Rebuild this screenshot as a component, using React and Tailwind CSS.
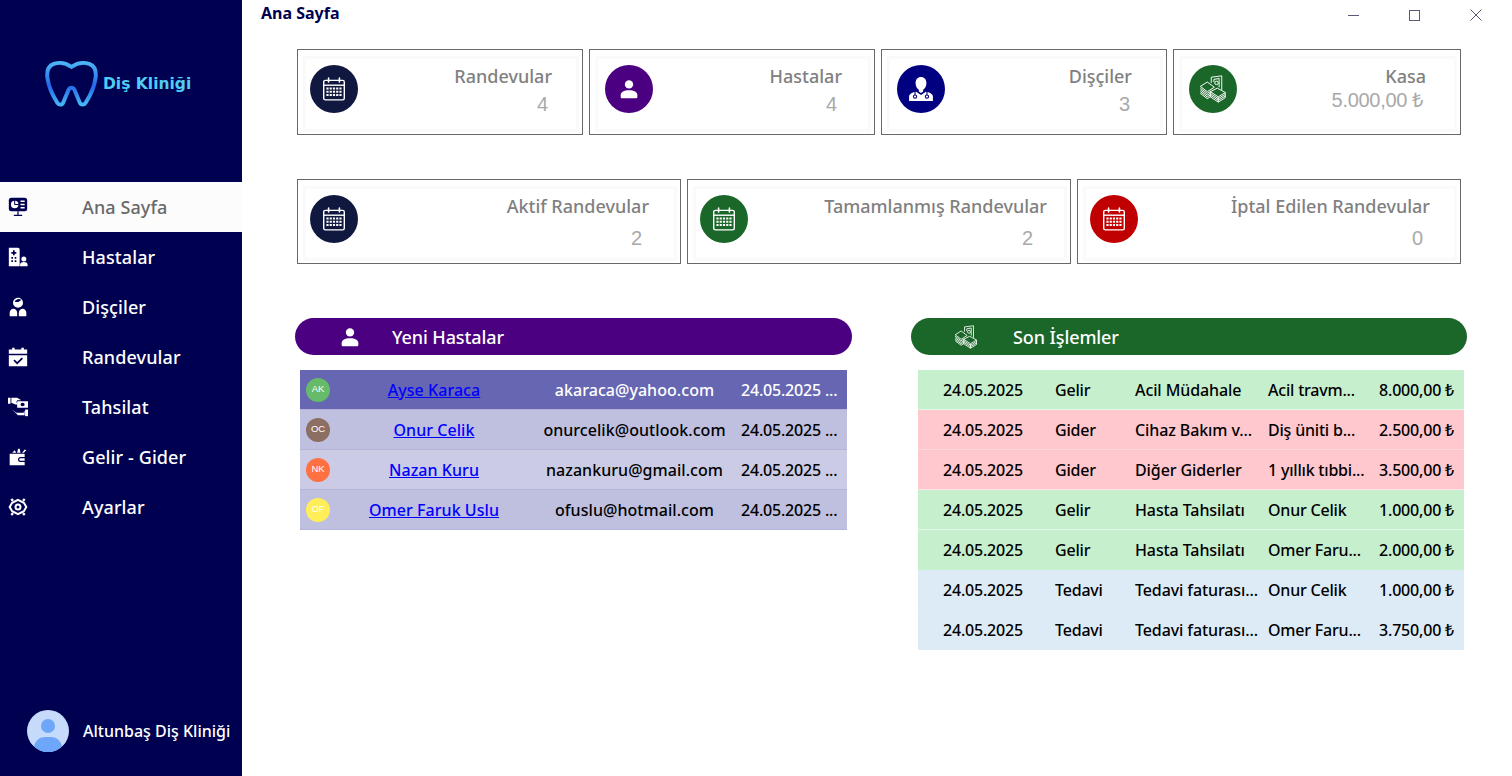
import React from 'react'

const FONT = { fontFamily: '"Noto Sans", "Open Sans", sans-serif' }

const CalendarIcon = ({ className }) => (
  <svg viewBox="0 0 24 24" className={className} fill="none" stroke="currentColor">
    <rect x="2.5" y="4" width="19" height="18" rx="1.5" strokeWidth="1.3" />
    <path d="M2.5 8.5h19" strokeWidth="1.3" />
    <path d="M7 2v3.5M17 2v3.5" strokeWidth="1.5" strokeLinecap="round" />
    <path d="M5 11.5h14M5 14.5h14M5 17.5h14" strokeWidth="1.7" strokeDasharray="2 1" />
  </svg>
)

const PersonIcon = ({ className }) => (
  <svg viewBox="0 0 24 24" className={className} fill="currentColor">
    <circle cx="12" cy="6.5" r="5" />
    <path d="M2 22v-2.5C2 15.5 6 13.5 12 13.5s10 2 10 6V22c0 .6-.4 1-1 1H3c-.6 0-1-.4-1-1z" />
  </svg>
)

const DoctorIcon = ({ className }) => (
  <svg viewBox="0 0 24 24" className={className}>
    <path fill="currentColor" d="M12 1c3 0 5 2.4 5 5.6 0 2.6-1.4 5-3 6.2v1.4l-2 1.600-2-1.600v-1.400C8.400 11.600 7 9.200 7 6.600 7 3.400 9 1 12 1z" />
    <path fill="currentColor" d="M7.500 14.500l4.500 3 4.500-3c3 .6 6.500 1.800 6.500 4.500v4H1v-4c0-2.700 3.500-3.900 6.500-4.500z" />
    <path fill="none" stroke="#000080" strokeWidth="1" d="M6.500 14.500v3M17.500 14.500v3" />
    <circle cx="6.500" cy="19" r="1.500" fill="none" stroke="#000080" strokeWidth="1" />
    <circle cx="17.500" cy="19" r="1.500" fill="none" stroke="#000080" strokeWidth="1" />
  </svg>
)

const MoneyIcon = ({ className }) => (
  <svg viewBox="0 0 32 32" className={className} fill="none" stroke="currentColor" strokeWidth="1.1" strokeLinejoin="round">
    <path d="M14 9V2.500l12-1.500v16" />
    <path d="M17 8V5l6-1v10" />
    <circle cx="20" cy="9" r="2" />
    <path d="M1.500 13l8-5 8 6-8 5z" />
    <path d="M1.500 15l8 6 4-2.500M1.500 17l8 6 4-2.500M1.500 19l8 6 4-2.500M1.500 21l8 6 4-2.500" />
    <path d="M13 19l8-4 9 5-8 5zM13 19v2l9 6 8-5v-2M13 21v2l9 6 8-5v-2M13 23v2l9 6 8-5v-2" />
    <path d="M22 25v6" />
  </svg>
)

const MonitorIcon = ({ className }) => (
  <svg viewBox="0 0 24 24" className={className}>
    <rect x="1" y="1" width="22" height="16" rx="3" fill="currentColor" />
    <path d="M12 17v4.500M7 22h10" stroke="currentColor" strokeWidth="1.500" />
    <circle cx="8" cy="9" r="4.500" fill="#fff" />
    <path d="M8 9V4M8 9h5" stroke="currentColor" strokeWidth="1.200" />
    <path d="M15 5h5M15 9h5M15 13h5" stroke="#fff" strokeWidth="1.800" />
  </svg>
)

const HospitalIcon = ({ className }) => (
  <svg viewBox="0 0 24 24" className={className}>
    <path fill="currentColor" fillRule="evenodd" d="M1 1h11a2 2 0 0 1 2 2v20H1zM6 4v2H4v2h2v2h2V8h2V6H8V4zM4 12v2h2v-2zM8 12v2h2v-2zM4 16v2h2v-2zM8 16v2h2v-2z" />
    <circle cx="19" cy="14.500" r="3" fill="currentColor" />
    <path fill="currentColor" d="M14.500 23v-2c0-2 2-3 4.500-3s4.500 1 4.500 3v2z" />
  </svg>
)

const DentistIcon = ({ className }) => (
  <svg viewBox="0 0 24 24" className={className} fill="currentColor">
    <path fillRule="evenodd" d="M12 1a6 6 0 1 1 0 12 6 6 0 0 1 0-12zM8 6h4.500L16 3.500A5 5 0 0 0 8 6z" />
    <path d="M2 23v-4c0-3 2-5 4.500-5 2.500 0 4.500 2 4.500 5v4zM13 23v-4c0-3 2-5 4.500-5 2.500 0 4.500 2 4.500 5v4z" />
  </svg>
)

const CalendarCheckIcon = ({ className }) => (
  <svg viewBox="0 0 24 24" className={className} fill="currentColor">
    <path fillRule="evenodd" d="M5 1h3v2h8V1h3v2h4v5H1V3h4zM1 10h22v13H1zM16.500 12.500L11 18l-3-3-1.500 1.500L11 21l7-7z" />
  </svg>
)

const HandCashIcon = ({ className }) => (
  <svg viewBox="0 0 24 24" className={className} fill="currentColor">
    <path d="M0 1h3v7H0zM4 1h7l5 3h-5l-1 2 2 3-3 0-5-2z" />
    <path fillRule="evenodd" d="M11 5h13v8H11zM15 9a2.500 2 0 1 0 5 0 2.500 2 0 0 0-5 0z" />
    <path d="M5 15l5 4h9v-2h1v5h-8z" />
    <path d="M20.500 15H24v8h-3.500z" />
  </svg>
)

const WalletIcon = ({ className }) => (
  <svg viewBox="0 0 24 24" className={className} fill="currentColor">
    <path fillRule="evenodd" d="M2 8h18v4h-5a3 3 0 0 0 0 6h5v4H2zM15 13.500h5v3h-5a1.500 1.500 0 0 1 0-3z" />
    <path d="M5 7l3-3 2 3zM11 7l1-5h2l1 5zM17 7l3-4 2 1-3 3z" />
  </svg>
)

const GearIcon = ({ className }) => (
  <svg viewBox="0 0 24 24" className={className} fill="none" stroke="currentColor">
    <path strokeWidth="2.400" d="M12 3.500l7 3.500 3 5-3 5-7 3.500L5 17l-3-5 3-5z" />
    <circle cx="12" cy="12" r="3" strokeWidth="2.400" />
    <path strokeWidth="3" d="M6 2.500l-2 2M18 2.500l2 2M6 21.500l-2-2M18 21.500l2-2" />
  </svg>
)

const ToothLogo = () => (
  <svg viewBox="0 0 54 48" className="w-[53px] h-[48px]" fill="none">
    <defs>
      <linearGradient id="tooth" x1="0" y1="0" x2="0" y2="1">
        <stop offset="0" stopColor="#4ab4f5" />
        <stop offset="0.55" stopColor="#2468ea" />
        <stop offset="1" stopColor="#45b6f5" />
      </linearGradient>
    </defs>
    <path
      stroke="url(#tooth)"
      strokeWidth="4"
      d="M27 6.500C22 3 15 1.500 9 3.500 3.500 5.500 1.500 11 2.500 18c1 7 5.500 18 10 25 1.500 2.500 5 2.500 6 0L24 30c1-3 5-3 6 0l5.500 13c1 2.500 4.500 2.500 6 0 4.500-7 9-18 10-25 1-7-1-12.500-6.500-14.500-6-2-13-.5-18 3z"
    />
  </svg>
)

const navItems = [
  { label: 'Ana Sayfa', icon: MonitorIcon, active: true },
  { label: 'Hastalar', icon: HospitalIcon },
  { label: 'Dişçiler', icon: DentistIcon },
  { label: 'Randevular', icon: CalendarCheckIcon },
  { label: 'Tahsilat', icon: HandCashIcon },
  { label: 'Gelir - Gider', icon: WalletIcon },
  { label: 'Ayarlar', icon: GearIcon },
]

const Sidebar = () => (
  <aside className="w-[242px] shrink-0 h-full bg-[#000050] flex flex-col">
    <div className="h-[182px] shrink-0 pl-[45px] pt-[60px]">
      <div className="flex items-center gap-[5px]">
        <ToothLogo />
        <span className="text-[15.500px] font-bold text-[#4fcdf5] whitespace-nowrap mt-[1px]" style={{ fontFamily: '"DejaVu Sans", sans-serif' }}>
          Diş Kliniği
        </span>
      </div>
    </div>
    <nav className="flex flex-col">
      {navItems.map(({ label, icon: Icon, active }) => (
        <div key={label} className={`h-[50px] flex items-center ${active ? 'bg-[#fcfcfc] text-[#696969]' : 'text-white'}`}>
          <div className={`w-[82px] pl-[8px] ${active ? 'text-[#000050]' : 'text-white'}`}>
            <Icon className="w-[20px] h-[20px]" />
          </div>
          <span className="text-[18px] font-medium tracking-[0.1px]">{label}</span>
        </div>
      ))}
    </nav>
    <div className="mt-auto pb-[24px] pl-[27px] flex items-center gap-[14px]">
      <div className="w-[42px] h-[42px] rounded-full bg-[#c6dafc] overflow-hidden relative">
        <div className="absolute left-[14px] top-[9px] w-[14px] h-[14px] rounded-full bg-[#6ea6f9]" />
        <div className="absolute left-[7px] top-[27px] w-[28px] h-[22px] rounded-full bg-[#6ea6f9]" />
      </div>
      <span className="text-[16px] font-medium text-white whitespace-nowrap">Altunbaş Diş Kliniği</span>
    </div>
  </aside>
)

const StatCard = ({ title, value, icon: Icon, color, className, iconSize, innerPad, titlePad, valueClass }) => (
  <div className={`${className} border border-[#696969] pl-[5px] pt-[6px] pr-[3px] pb-[2px]`}>
    <div className={`h-full border-[3px] border-[#fafafa] flex items-start pt-[6px] ${innerPad}`}>
      <div className="w-[48px] h-[48px] rounded-full flex items-center justify-center text-white shrink-0" style={{ backgroundColor: color }}>
        <Icon className={iconSize} />
      </div>
      <div className="flex-1 flex flex-col items-end">
        <div className={`text-[18px] font-medium text-[#808080] leading-[24px] -mt-[1px] whitespace-nowrap ${titlePad}`}>{title}</div>
        <div className={`text-[20px] text-[#a9a9a9] leading-[24px] ${valueClass}`} style={{ fontFamily: '"Liberation Sans", sans-serif' }}>{value}</div>
      </div>
    </div>
  </div>
)

const patients = [
  { initials: 'AK', color: '#66bb6a', name: 'Ayse Karaca', email: 'akaraca@yahoo.com', bg: 'bg-[#6666b2]', text: 'text-white' },
  { initials: 'OC', color: '#8d6e63', name: 'Onur Celik', email: 'onurcelik@outlook.com', bg: 'bg-[#bfbfdf]', text: 'text-black' },
  { initials: 'NK', color: '#ff7043', name: 'Nazan Kuru', email: 'nazankuru@gmail.com', bg: 'bg-[#cbcbe5]', text: 'text-black' },
  { initials: 'OF', color: '#ffee58', name: 'Omer Faruk Uslu', email: 'ofuslu@hotmail.com', bg: 'bg-[#bfbfdf]', text: 'text-black' },
]

const transactions = [
  { type: 'Gelir', cat: 'Acil Müdahale', desc: 'Acil travm...', amount: '8.000,00 ₺', bg: 'bg-[#c6efce]', line: 'border-white/50' },
  { type: 'Gider', cat: 'Cihaz Bakım v...', desc: 'Diş üniti b...', amount: '2.500,00 ₺', bg: 'bg-[#ffc7ce]', line: 'border-white/30' },
  { type: 'Gider', cat: 'Diğer Giderler', desc: '1 yıllık tıbbi...', amount: '3.500,00 ₺', bg: 'bg-[#ffc7ce]', line: 'border-white/50' },
  { type: 'Gelir', cat: 'Hasta Tahsilatı', desc: 'Onur Celik', amount: '1.000,00 ₺', bg: 'bg-[#c6efce]', line: 'border-white/50' },
  { type: 'Gelir', cat: 'Hasta Tahsilatı', desc: 'Omer Faru...', amount: '2.000,00 ₺', bg: 'bg-[#c6efce]', line: 'border-transparent' },
  { type: 'Tedavi', cat: 'Tedavi faturası...', desc: 'Onur Celik', amount: '1.000,00 ₺', bg: 'bg-[#ddebf7]', line: 'border-white/10' },
  { type: 'Tedavi', cat: 'Tedavi faturası...', desc: 'Omer Faru...', amount: '3.750,00 ₺', bg: 'bg-[#ddebf7]', line: 'border-transparent' },
]

const SectionHeader = ({ title, icon: Icon, color, iconClass, titleClass }) => (
  <div className="h-[37px] rounded-full flex items-center text-white" style={{ backgroundColor: color }}>
    <Icon className={iconClass} />
    <span className={`text-[18px] font-medium tracking-[-0.1px] pt-[2px] ${titleClass}`}>{title}</span>
  </div>
)

const WindowControls = () => (
  <div className="flex items-center text-[#5a5a78] pr-[30px] pt-[9px]">
    <div className="w-[11px] h-[1px] bg-current mr-[50px]" />
    <div className="w-[11px] h-[11px] border border-current mr-[50px]" />
    <svg viewBox="0 0 12 12" className="w-[12px] h-[12px]" fill="none" stroke="currentColor" strokeWidth="1">
      <path d="M.5.5l11 11M11.500.5l-11 11" />
    </svg>
  </div>
)

export default function App() {
  return (
    <div className="flex w-[1512px] h-[776px] overflow-hidden bg-white" style={FONT}>
      <Sidebar />
      <main className="flex-1 flex flex-col min-w-0">
        {/* Title bar */}
        <div className="h-[49px] shrink-0 flex items-start justify-between pl-[19px]">
          <span className="text-[16px] font-bold text-[#000050] leading-[26px]">Ana Sayfa</span>
          <WindowControls />
        </div>

        {/* Stat cards */}
        <div className="ml-[55px] flex gap-[6px]">
          <StatCard title="Randevular" value="4" icon={CalendarIcon} color="#11183f" className="w-[286px] h-[86px]" iconSize="w-[26px] h-[26px]" innerPad="pl-[4px]" titlePad="pr-[24px]" valueClass="pr-[28px] mt-[4px]" />
          <StatCard title="Hastalar" value="4" icon={PersonIcon} color="#4b0082" className="w-[286px] h-[86px]" iconSize="w-[20px] h-[20px]" innerPad="pl-[7px]" titlePad="pr-[26px]" valueClass="pr-[31px] mt-[4px]" />
          <StatCard title="Dişçiler" value="3" icon={DoctorIcon} color="#000080" className="w-[286px] h-[86px]" iconSize="w-[26px] h-[26px]" innerPad="pl-[7px]" titlePad="pr-[28px]" valueClass="pr-[30px] mt-[4px]" />
          <StatCard title="Kasa" value="5.000,00 ₺" icon={MoneyIcon} color="#1b6729" className="w-[288px] h-[86px]" iconSize="w-[28px] h-[28px]" innerPad="pl-[7px]" titlePad="pr-[28px]" valueClass="pr-[31px] tracking-[-0.3px]" />
        </div>

        <div className="ml-[55px] mt-[44px] flex gap-[6px]">
          <StatCard title="Aktif Randevular" value="2" icon={CalendarIcon} color="#11183f" className="w-[384px] h-[85px]" iconSize="w-[26px] h-[26px]" innerPad="pl-[4px]" titlePad="pr-[25px]" valueClass="pr-[32px] mt-[8px]" />
          <StatCard title="Tamamlanmış Randevular" value="2" icon={CalendarIcon} color="#1b6729" className="w-[384px] h-[85px]" iconSize="w-[26px] h-[26px]" innerPad="pl-[4px]" titlePad="pr-[17px]" valueClass="pr-[31px] mt-[8px]" />
          <StatCard title="İptal Edilen Randevular" value="0" icon={CalendarIcon} color="#c00000" className="w-[384px] h-[85px]" iconSize="w-[26px] h-[26px]" innerPad="pl-[4px]" titlePad="pr-[24px]" valueClass="pr-[31px] mt-[8px]" />
        </div>

        {/* Lists */}
        <div className="ml-[53px] mt-[54px] flex gap-[59px]">
          <section className="w-[557px]">
            <SectionHeader title="Yeni Hastalar" icon={PersonIcon} color="#4b0082" iconClass="w-[20px] h-[20px] ml-[45px]" titleClass="ml-[32px]" />
            <div className="mt-[15px] mx-[5px] flex flex-col">
              {patients.map(p => (
                <div key={p.name} className={`h-[40px] flex items-center text-[16px] font-medium ${p.bg} ${p.text} border-b border-[#b4b4d8]`}>
                  <div className="w-[40px] pl-[6px] shrink-0">
                    <div className="w-[24px] h-[24px] rounded-full flex items-center justify-center text-[9.500px] text-white" style={{ backgroundColor: p.color, fontFamily: '"Liberation Sans", sans-serif' }}>
                      {p.initials}
                    </div>
                  </div>
                  <a href="#" className="w-[188px] text-center text-[#0000ff] underline tracking-[0.05px] whitespace-nowrap">{p.name}</a>
                  <span className="w-[213px] text-center tracking-[0.05px] whitespace-nowrap">{p.email}</span>
                  <span className="tracking-[-0.2px] whitespace-nowrap">24.05.2025 ...</span>
                </div>
              ))}
            </div>
          </section>

          <section className="w-[556px]">
            <SectionHeader title="Son İşlemler" icon={MoneyIcon} color="#1b6729" iconClass="w-[24px] h-[24px] ml-[43px]" titleClass="ml-[35px]" />
            <div className="mt-[15px] ml-[7px] mr-[3px] flex flex-col">
              {transactions.map((t, i) => (
                <div key={i} className={`h-[40px] flex items-center text-[16px] font-medium text-black border-b whitespace-nowrap tracking-[-0.2px] ${t.bg} ${t.line}`}>
                  <span className="w-[137px] pl-[25px] shrink-0">24.05.2025</span>
                  <span className="w-[80px] shrink-0">{t.type}</span>
                  <span className="w-[133px] shrink-0 tracking-[-0.1px]">{t.cat}</span>
                  <span className="w-[100px] shrink-0">{t.desc}</span>
                  <span className="flex-1 text-right pr-[10px]">{t.amount}</span>
                </div>
              ))}
            </div>
          </section>
        </div>
      </main>
    </div>
  )
}
